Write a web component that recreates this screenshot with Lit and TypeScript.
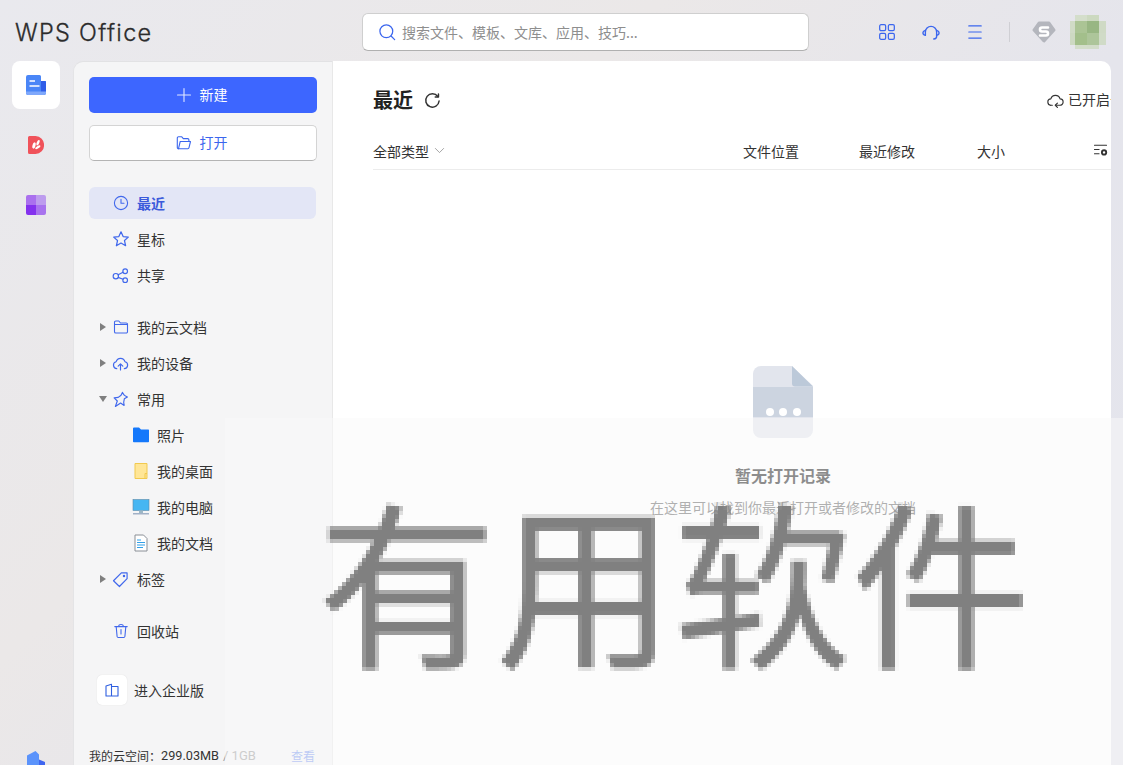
import { LitElement, html, css, svg } from "lit";
import { customElement } from "lit/decorators.js";

const s = (size: number, body: unknown, view = "0 0 16 16") => html`<svg width=${size} height=${size} viewBox=${view} fill="none" stroke="currentColor" stroke-width="1.1" stroke-linecap="round" stroke-linejoin="round">${body}</svg>`;

const icons = {
  clock: s(16, svg`<circle cx="8" cy="8" r="6.6"/><path d="M8 4.4V8.2H11"/>`),
  star: s(18, svg`<path d="M8 1.6l1.9 4.2 4.6.5-3.4 3.1 1 4.6L8 11.6 3.9 14l1-4.6L1.5 6.300l4.600-.5z"/>`),
  share: s(17, svg`<circle cx="3.6" cy="8.600" r="2.500"/><circle cx="12.400" cy="4" r="2.200"/><circle cx="12.400" cy="12.400" r="2.200"/><path d="M5.800 7.300l4.600-2.400M5.800 9.800l4.600 1.700"/>`),
  folder: s(16, svg`<path d="M1.500 3.300a1.300 1.300 0 0 1 1.300-1.300h3l1.700 2h5.700a1.300 1.300 0 0 1 1.300 1.300v7.400a1.300 1.300 0 0 1-1.300 1.300H2.800a1.300 1.300 0 0 1-1.300-1.300z"/><path d="M1.500 5.500h13"/>`),
  cloud: s(17, svg`<path d="M4.500 12.800a3.300 3.300 0 0 1-.6-6.500 4.300 4.300 0 0 1 8.300 0 3.300 3.300 0 0 1-.6 6.500"/><path d="M8 14V8.500M5.800 10.500L8 8.300l2.200 2.200"/>`),
  pin: s(17, svg`<path d="M9.800 1.300c.6 1.700 2.300 3.400 4.700 4.300l-2.900 1.800-.6 3.200.4 3-3.300-2.300-4.900 3.200 1.800-5.100L2 6.500l3.900-.5 2.600-2z"/>`),
  tag: s(17, svg`<path d="M8.800 1.800h5.400v5.400l-7.200 7.400-5.600-5.400z"/><circle cx="11.300" cy="4.700" r=".6"/>`),
  trash: s(16, svg`<path d="M1.800 3.600h12.400M5.500 3.400c.2-1.300 1-1.900 2.500-1.900s2.300.6 2.500 1.900M3.200 3.800l.9 9.700c.1.700.5 1 1.100 1h5.600c.6 0 1-.3 1.100-1l.9-9.700M8 6.600v4.400"/>`),
  openFolder: s(16, svg`<path d="M2.500 13.700a1.200 1.200 0 0 1-1.200-1.200V3a1.200 1.200 0 0 1 1.200-1.200h3.300l1.500 1.800h4.400a1.200 1.200 0 0 1 1.200 1.200v1.700"/><path d="M4.200 6.500h10.300l-1.500 6.200a1.200 1.200 0 0 1-1.200 1H2.500z"/>`),
  enterprise: s(16, svg`<path d="M7.500 2.300L2 4v10h12V4.500l-6.500-.1zM7.500 2.300V14"/>`),
  search: s(18, svg`<circle cx="7.400" cy="7.400" r="5.700"/><path d="M11.600 11.600l3.200 3.200"/>`),
  apps: s(18, svg`<rect x="1.500" y="1.500" width="5.300" height="5.300" rx="1.200"/><rect x="9.200" y="1.500" width="5.300" height="5.300" rx="1.200"/><rect x="1.500" y="9.200" width="5.300" height="5.300" rx="1.200"/><rect x="9.200" y="9.200" width="5.300" height="5.300" rx="1.200"/>`),
  headset: s(20, svg`<path d="M3.500 10.500V8a4.500 4.500 0 0 1 9 0v3.500c0 1.200-1 1.900-2.300 2.100"/><path d="M3.500 6.700c-1.300.4-2 1-2 2s.7 1.600 2 2M12.500 6.700c1.300.4 2 1 2 2s-.7 1.600-2 2"/>`),
  menu: s(18, svg`<path d="M2.500 2.600h11M2.500 8h11M2.500 13.400h11"/>`),
  refresh: html`<svg width="17" height="17" viewBox="0 0 16 16" fill="none" stroke="currentColor" stroke-width="1.400" stroke-linecap="round" stroke-linejoin="round"><path d="M13 4.200A6.300 6.300 0 1 0 14.200 8.500"/><path d="M13.600 1.800v3h-3"/></svg>`,
  syncCloud: s(17, svg`<path d="M5 12.500H4a3 3 0 0 1-.4-6 4.500 4.500 0 0 1 8.700 0 3 3 0 0 1-.3 6H8"/><path d="M9.800 10.500L7.800 12.500l2 2"/>`),
  chevron: s(11, svg`<path d="M2 5l6 6 6-6"/>`),
  settings: s(15, svg`<path d="M1.500 2.500h13M1.500 7h5M1.500 11.500h5"/><circle cx="11.800" cy="10" r="2.300" stroke-width="2"/>`),
  plus: s(16, svg`<path d="M8 1.500v13M1.500 8h13"/>`),
};

const railIcons = [
  html`<svg width="20" height="20" viewBox="0 0 20 20"><path d="M0 2a2 2 0 0 1 2-2h11.500a1.500 1.500 0 0 1 1.500 1.500V6h5v12a2 2 0 0 1-2 2H2a2 2 0 0 1-2-2z" fill="#4a86f7"/><path d="M15 6h3.500A1.500 1.500 0 0 1 20 7.500V17h-5z" fill="#2f5de8"/><path d="M0 16.500h20V18a2 2 0 0 1-2 2H2a2 2 0 0 1-2-2z" fill="#7fa8fb"/><path d="M3.500 6h5.500M3.500 11h10" stroke="#fff" stroke-width="1.500"/></svg>`,
  html`<svg width="16" height="18" viewBox="0 0 16 18"><path d="M0 1.500A1.500 1.500 0 0 1 1.500 0H7.500a8.500 8.500 0 0 1 8.500 9 8.500 8.500 0 0 1-8.500 9H1.500A1.500 1.500 0 0 1 0 16.500z" fill="#f0525a"/><ellipse cx="6" cy="9.500" rx="1.500" ry="3.200" transform="rotate(15 6 9.500)" fill="#fff"/><ellipse cx="10" cy="6.800" rx="1.300" ry="3" transform="rotate(25 10 6.800)" fill="#fff"/><ellipse cx="9.800" cy="11.200" rx="1.200" ry="3" transform="rotate(60 9.800 11.200)" fill="#fff"/></svg>`,
  html`<svg width="20" height="20" viewBox="0 0 20 20"><path d="M0 2a2 2 0 0 1 2-2h8v10H0z" fill="#aa70ee"/><path d="M10 0h8a2 2 0 0 1 2 2v8H10z" fill="#bd9cee"/><path d="M0 10h10v10H2a2 2 0 0 1-2-2z" fill="#8431ee"/><path d="M10 10h10v8a2 2 0 0 1-2 2H10z" fill="#a873ee"/></svg>`,
  html`<svg width="20" height="30" viewBox="0 0 20 30"><path d="M1 5.500L9.500 1 13 4.500V30H1z" fill="#5b93fb"/><path d="M13 9.500l6 2.500v18h-6z" fill="#3f66f0"/></svg>`,
];

const yellowDoc = html`<svg width="18" height="18" viewBox="0 0 18 18"><path d="M3 1.500h12v15H3z" fill="#ffe697" stroke="#f1c94f"/><path d="M13 16.500v-5h2" fill="none" stroke="#f1c94f"/></svg>`;
const blueFolder = html`<svg width="18" height="18" viewBox="0 0 18 18"><path d="M1 2.500A1 1 0 0 1 2 1.500h5l2 2h7.500a.8.800 0 0 1 .5 1V15.500a.8.800 0 0 1-.8.800H1.800a.8.800 0 0 1-.8-.8z" fill="#1478fb"/></svg>`;
const monitor = html`<svg width="18" height="18" viewBox="0 0 18 18"><rect x="1" y="1.500" width="16" height="11" fill="#46b6f2" stroke="#5a8ba8" stroke-width=".6"/><path d="M7 12.500h4v2.500H7z" fill="#9db7c6"/><path d="M1 15.800h16" stroke="#8da0bc" stroke-width="1.200"/></svg>`;
const docFile = html`<svg width="18" height="18" viewBox="0 0 18 18"><path d="M3 1h8.500L15 4.500V17H3z" fill="#fff" stroke="#8a8f96"/><path d="M5 6h4M5 8.500h8M5 11h8M5 13.500h6" stroke="#33a0e8" stroke-width="1"/></svg>`;

const mosaic = [
  "transparent", "#d4decb", "#ccd9c0", "transparent",
  "#d0dbc6", "#abc495", "#98b683", "#cfdac5",
  "#cdd9c2", "#a3bf8b", "#adc59a", "#d0dbc7",
  "transparent", "#d3ddca", "#d2dcc9", "transparent",
];

@customElement("app-root")
export class AppRoot extends LitElement {
  static styles = css`
    :host { display: block; width: 1123px; height: 765px; position: relative; overflow: hidden; font-family: "Noto Sans CJK SC", "Noto Sans", sans-serif; font-size: 14px; color: #333; background: linear-gradient(135deg, #e9e9ee 0%, #ebe8e8 35%, #e5e5ec 62%, #e4e5ed 100%); }
    svg { display: block; flex: none; }
    .top { height: 61px; display: flex; align-items: center; box-sizing: border-box; padding-left: 15px; }
    .logo { width: 347px; font-family: Inter, sans-serif; font-size: 23.500px; font-weight: 300; letter-spacing: 1.300px; color: #2c2c2c; line-height: 1; margin-top: 4px; -webkit-text-stroke: .3px #2c2c2c; }
    .search { width: 447px; height: 38px; box-sizing: border-box; margin-top: 2px; background: #fff; border: 1px solid #cfcfcf; border-bottom-color: #b0b0b0; border-radius: 6px; display: flex; align-items: center; gap: 6px; padding-left: 15px; color: #8e8e8e; font-size: 14px; }
    .search svg { color: #3b66ee; }
    .tools { display: flex; align-items: center; margin-left: 56px; color: #3b66ee; height: 40px; margin-top: 2px; }
    .tool { width: 44px; display: flex; justify-content: center; }
    .sep { width: 1px; height: 20px; background: #cfcfd4; margin: 0 22px 0 12px; }
    .badge { margin-right: 14px; }
    .avatar { display: grid; width: 36px; height: 34px; grid-template-columns: 5px 12px 12px 7px; grid-template-rows: 6px 12px 12px 4px; }
    .body { display: flex; height: 704px; }
    .rail { width: 73px; flex: none; display: flex; flex-direction: column; align-items: flex-start; padding-left: 12px; box-sizing: border-box; gap: 12px; }
    .rail-cell { width: 48px; height: 48px; flex: none; border-radius: 8px; display: flex; align-items: center; justify-content: center; }
    .rail-cell.on { background: #fff; }
    .rail-cell.last { margin-top: 500px; }
    .side { width: 260px; flex: none; box-sizing: border-box; background: #f5f5f6; border-radius: 10px 0 0 0; border-right: 1px solid #e8e8e8; border-top: 1px solid #e2e2e4; border-left: 1px solid #e4e4e6; padding: 15px 0 0 15px; }
    .btn { width: 228px; height: 36px; box-sizing: border-box; border-radius: 5px; display: flex; align-items: center; justify-content: center; gap: 8px; font-size: 14px; padding-right: 3px; }
    .btn span { margin-bottom: 2px; }
    .btn.primary { background: #3d66ff; color: #fff; }
    .btn.primary svg { color: #fff; opacity: .85; }
    .btn.open { margin-top: 12px; background: #fff; border: 1px solid #d4d4d4; border-bottom-color: #b4b4b4; color: #3b66ee; }
    .nav { margin-top: 26px; width: 227px; }
    .row { height: 32px; margin-bottom: 4px; display: flex; align-items: center; border-radius: 6px; position: relative; padding-left: 23px; gap: 8px; }
    .row .label { margin-top: 1px; margin-bottom: 1px; }
    .row .ic { width: 17px; display: flex; justify-content: center; color: #4168ec; flex: none; }
    .row.on { background: #e3e6f6; color: #3b5bdb; font-weight: 700; }
    .row.on .label { margin-top: 0; margin-bottom: 0; }
    .row.leaf { padding-left: 43px; gap: 7px; }
    .row.leaf .ic { width: 18px; }
    .row .arrow { position: absolute; left: 11px; top: 50%; margin-top: -4px; width: 0; height: 0; border-top: 4px solid transparent; border-bottom: 4px solid transparent; border-left: 6px solid #7f7f7f; }
    .row .arrow.down { border-left: 4px solid transparent; border-right: 4px solid transparent; border-top: 6px solid #7f7f7f; border-bottom: 0; left: 10px; margin-top: -3px; }
    .gap { height: 16px; }
    .ent { margin-top: 28px; margin-left: 8px; display: flex; align-items: center; gap: 7px; }
    .ent-box { width: 30px; height: 30px; background: #fff; border-radius: 5px; display: flex; align-items: center; justify-content: center; color: #2f5fe0; box-shadow: 0 0 1px #d4d4d4; }
    .quota { margin-top: 42px; width: 226px; display: flex; font-size: 12px; align-items: center; }
    .quota .used { font-family: Roboto, sans-serif; font-size: 12.700px; }
    .quota .tot { color: #a0a0a0; font-family: Roboto, sans-serif; font-size: 13px; margin-left: 4px; }
    .quota .look { margin-left: auto; color: #7f9cf0; }
    .main { width: 778px; flex: none; background: #fff; border-radius: 0 10px 0 0; overflow: hidden; padding-left: 40px; box-sizing: border-box; }
    .inner { width: 820px; }
    .head { height: 78px; display: flex; align-items: center; }
    .title { font-size: 20px; font-weight: 700; color: #222; margin-right: 11px; margin-bottom: 2px; }
    .head svg { color: #333; }
    .sync { display: flex; align-items: center; gap: 4px; margin-left: 606px; font-size: 14px; white-space: nowrap; flex: none; }
    .sync span { margin-bottom: 2px; }
    .cols { height: 31px; box-sizing: border-box; padding-bottom: 7px; display: grid; grid-template-columns: 370px 116px 118px 116px 1fr; border-bottom: 1px solid #ececec; align-items: center; font-size: 14px; color: #333; }
    .cols .first { display: flex; align-items: center; gap: 5px; }
    .cols .first svg { color: #888; }
    .cols .set svg { color: #333; }
    .empty { display: flex; flex-direction: column; align-items: center; padding-top: 196px; }
    .e-title { margin-top: 25px; font-size: 16px; font-weight: 700; color: #1e1e1e; margin-bottom: 1px; }
    .e-sub { margin-top: 9px; font-size: 14px; color: #666; }
    .veil { position: absolute; left: 225px; right: 0; top: 418px; bottom: 0; background: rgba(249, 249, 249, .5); pointer-events: none; }
    .mark { position: absolute; left: 318px; top: 458px; font-size: 178px; font-weight: 400; line-height: 240px; color: #808080; white-space: nowrap; pointer-events: none; filter: url(#mosaic); }
    .defs { position: absolute; width: 0; height: 0; }
  `;

  private row(ic: unknown, label: string, arrow = "", cls = "") {
    return html`<div class="row ${cls}">${arrow ? html`<span class="arrow ${arrow === "down" ? "down" : ""}"></span>` : ""}<span class="ic">${ic}</span><span class="label">${label}</span></div>`;
  }

  render() {
    return html`
      <div class="top">
        <div class="logo">WPS Office</div>
        <div class="search">${icons.search}<span>搜索文件、模板、文库、应用、技巧...</span></div>
        <div class="tools">
          <div class="tool">${icons.apps}</div>
          <div class="tool">${icons.headset}</div>
          <div class="tool">${icons.menu}</div>
          <div class="sep"></div>
          <div class="badge"><svg width="24" height="22" viewBox="0 0 24 22"><path d="M7 2h10l5 7-10 11L2 9z" fill="#b4b6bd" stroke="#b4b6bd" stroke-width="3" stroke-linejoin="round"/><path d="M16 6.500H10a2 2 0 0 0 0 4h4a2 2 0 0 1 0 4H8" fill="none" stroke="#fff" stroke-width="2.600" stroke-linecap="round"/></svg></div>
          <div class="avatar">${mosaic.map((c) => html`<span style="background:${c}"></span>`)}</div>
        </div>
      </div>
      <div class="body">
        <div class="rail">
          ${railIcons.map((ic, i) => html`<div class="rail-cell ${i === 0 ? "on" : ""} ${i === 3 ? "last" : ""}">${ic}</div>`)}
        </div>
        <div class="side">
          <div class="btn primary">${icons.plus}<span>新建</span></div>
          <div class="btn open">${icons.openFolder}<span>打开</span></div>
          <div class="nav">
            ${this.row(icons.clock, "最近", "", "on")}
            ${this.row(icons.star, "星标")}
            ${this.row(icons.share, "共享")}
            <div class="gap"></div>
            ${this.row(icons.folder, "我的云文档", "right")}
            ${this.row(icons.cloud, "我的设备", "right")}
            ${this.row(icons.pin, "常用", "down")}
            ${this.row(blueFolder, "照片", "", "leaf")}
            ${this.row(yellowDoc, "我的桌面", "", "leaf")}
            ${this.row(monitor, "我的电脑", "", "leaf")}
            ${this.row(docFile, "我的文档", "", "leaf")}
            ${this.row(icons.tag, "标签", "right")}
            <div class="gap"></div>
            ${this.row(icons.trash, "回收站")}
          </div>
          <div class="ent"><div class="ent-box">${icons.enterprise}</div><span>进入企业版</span></div>
          <div class="quota"><span>我的云空间：</span><span class="used">299.03MB</span><span class="tot">/ 1GB</span><span class="look">查看</span></div>
        </div>
        <div class="main">
          <div class="inner">
            <div class="head"><span class="title">最近</span>${icons.refresh}<div class="sync">${icons.syncCloud}<span>已开启云同步</span></div></div>
            <div class="cols">
              <div class="first"><span>全部类型</span>${icons.chevron}</div>
              <div>文件位置</div><div>最近修改</div><div>大小</div><div class="set">${icons.settings}</div>
            </div>
            <div class="empty">
              <svg width="60" height="72" viewBox="0 0 60 72"><path d="M0 8a8 8 0 0 1 8-8h31l21 20v44a8 8 0 0 1-8 8H8a8 8 0 0 1-8-8z" fill="#e2e5ed"/><path d="M0 21h60v30H0z" fill="#ccd4e0"/><path d="M39 0l21 20.500H42a3 3 0 0 1-3-3z" fill="#bcc9d9"/><circle cx="17" cy="46" r="4" fill="#fff"/><circle cx="30" cy="46" r="4" fill="#fff"/><circle cx="44" cy="46" r="4" fill="#fff"/></svg>
              <div class="e-title">暂无打开记录</div>
              <div class="e-sub">在这里可以找到你最近打开或者修改的文档</div>
            </div>
          </div>
        </div>
      </div>
      <div class="veil"></div>
      <svg class="defs" aria-hidden="true"><filter id="mosaic" x="-2%" y="-2%" width="104%" height="104%" color-interpolation-filters="sRGB"><feGaussianBlur stdDeviation="1.100" result="b"/><feFlood x="2" y="2" width="1" height="1" flood-color="#000"/><feComposite width="4" height="4"/><feTile result="g"/><feComposite in="b" in2="g" operator="in"/><feMorphology operator="dilate" radius="2"/></filter></svg>
      <div class="mark">有用软件</div>
    `;
  }
}
